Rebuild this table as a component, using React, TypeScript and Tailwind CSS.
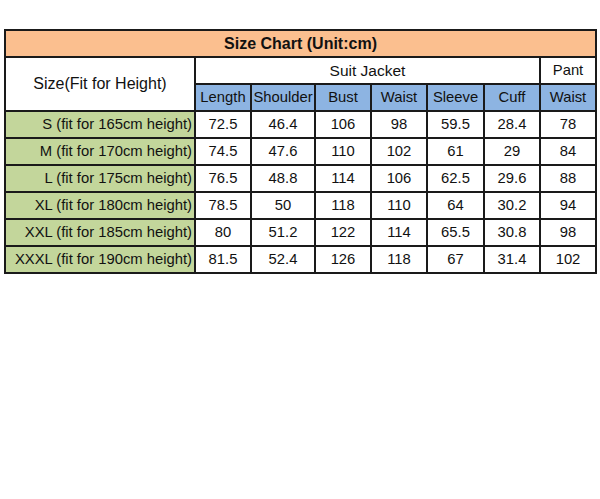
const sizes = [
  { label: "S (fit for 165cm height)", v: ["72.5", "46.4", "106", "98", "59.5", "28.4", "78"] },
  { label: "M (fit for 170cm height)", v: ["74.5", "47.6", "110", "102", "61", "29", "84"] },
  { label: "L (fit for 175cm height)", v: ["76.5", "48.8", "114", "106", "62.5", "29.6", "88"] },
  { label: "XL (fit for 180cm height)", v: ["78.5", "50", "118", "110", "64", "30.2", "94"] },
  { label: "XXL (fit for 185cm height)", v: ["80", "51.2", "122", "114", "65.5", "30.8", "98"] },
  { label: "XXXL (fit for 190cm height)", v: ["81.5", "52.4", "126", "118", "67", "31.4", "102"] },
];

const heads = ["Length", "Shoulder", "Bust", "Waist", "Sleeve", "Cuff", "Waist"];
const widths = [190, 56, 64, 56, 56, 57, 56, 56];

const cell = "border-2 border-[#1a1a1a] h-[27px] p-0 text-center";

export default function App() {
  return (
    <div className="w-[600px] h-[499px] bg-white pt-[29px] pl-[4px] font-['Liberation_Sans',Arial,sans-serif] text-[14.8px] text-[#111] leading-none">
      <table className="table-fixed border-collapse w-[592px]">
        <colgroup>
          {widths.map((w, i) => (
            <col key={i} style={{ width: w }} />
          ))}
        </colgroup>
        <tbody>
          <tr>
            <td colSpan={8} className={`${cell} bg-[#fbbf8f] font-bold text-[16px]`}>
              Size Chart (Unit:cm)
            </td>
          </tr>
          <tr>
            <td rowSpan={2} className={`${cell} text-[16px]`}>
              Size(Fit for Height)
            </td>
            <td colSpan={6} className={`${cell} text-[15.5px]`}>
              Suit Jacket
            </td>
            <td className={cell}>Pant</td>
          </tr>
          <tr>
            {heads.map((h, i) => (
              <td key={i} className={`${cell} bg-[#8db4e2]`}>
                {h}
              </td>
            ))}
          </tr>
          {sizes.map((s) => (
            <tr key={s.label}>
              <td className={`${cell} bg-[#c3d69b] !text-right pr-[2px]`}>{s.label}</td>
              {s.v.map((x, i) => (
                <td key={i} className={cell}>
                  {x}
                </td>
              ))}
            </tr>
          ))}
        </tbody>
      </table>
    </div>
  );
}
